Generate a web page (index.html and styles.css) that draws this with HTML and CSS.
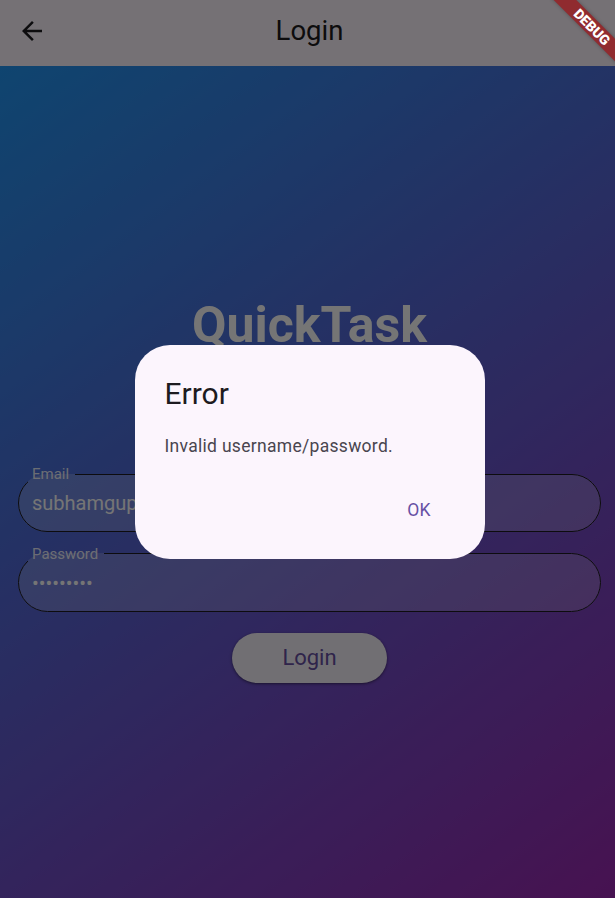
FILE: index.html
```html
<!DOCTYPE html>
<html lang="en">
<head>
<meta charset="utf-8">
<title>Login</title>
<link rel="stylesheet" href="styles.css">
</head>
<body>
<div class="screen">
  <header class="appbar">
    <button class="back" aria-label="Back">
      <svg viewBox="0 0 24 24" width="30" height="30"><path d="M20 11H7.83l5.59-5.59L12 4l-8 8 8 8 1.41-1.41L7.83 13H20v-2z"/></svg>
    </button>
    <h1 class="title">Login</h1>
    <span class="spacer"></span>
  </header>
  <main class="content">
    <div class="brand">QuickTask</div>
    <fieldset class="field">
      <legend>Email</legend>
      <div class="value">subhamgupta@gmail.com</div>
    </fieldset>
    <fieldset class="field field-second">
      <legend>Password</legend>
      <div class="value dots">•••••••••</div>
    </fieldset>
    <button class="login">Login</button>
  </main>
  <div class="barrier">
    <div class="dialog" role="alertdialog">
      <h2 class="dialog-title">Error</h2>
      <p class="dialog-body">Invalid username/password.</p>
      <div class="actions"><button class="ok">OK</button></div>
    </div>
  </div>
  <div class="banner">DEBUG</div>
</div>
</body>
</html>
```
FILE: styles.css
```css
html, body {
  margin: 0;
  padding: 0;
  overflow: hidden;
}
body {
  font-family: Roboto, "Liberation Sans", sans-serif;
}
.screen {
  position: relative;
  width: 619px;
  height: 904px;
  overflow: hidden;
}
.appbar {
  height: 66px;
  box-sizing: border-box;
  padding: 0 0 4px 17px;
  background: #fef7ff;
  display: flex;
  align-items: center;
}
.back {
  width: 30px;
  height: 30px;
  padding: 0;
  border: 0;
  background: none;
  display: flex;
}
.back svg {
  fill: #1d1b20;
}
.title {
  flex: 1;
  margin: 0;
  text-align: center;
  font-size: 27.5px;
  font-weight: 400;
  line-height: 32px;
  color: #1d1b20;
}
.spacer {
  width: 47px;
}
.content {
  height: 838px;
  box-sizing: border-box;
  padding-top: 231px;
  background: linear-gradient(143.55deg, #2196f3, #9c27b0);
  display: flex;
  flex-direction: column;
  align-items: center;
}
.brand {
  font-size: 50px;
  line-height: 56px;
  font-weight: 700;
  color: #ffffff;
  margin-bottom: 113px;
}
.field {
  align-self: stretch;
  margin: 0 18px;
  min-width: 0;
  padding: 8.7px 13px 16.8px;
  border: 1px solid #1d1b20;
  border-radius: 30px;
  background: rgba(255, 255, 255, 0.2);
}
.field legend {
  margin-left: -4px;
  padding: 0 6px 0 4px;
  font-size: 15px;
  line-height: 16px;
  color: rgba(255, 255, 255, 0.9);
}
.field-second {
  margin-top: 13.5px;
}
.value {
  font-size: 20px;
  line-height: 24px;
  color: #ffffff;
  white-space: nowrap;
  overflow: hidden;
}
.login {
  margin-top: 20.5px;
  width: 155px;
  height: 50px;
  border: 0;
  border-radius: 25px;
  background: #f7f2fa;
  color: #6750a4;
  font-family: inherit;
  font-size: 22px;
  font-weight: 400;
  box-shadow: 0 1px 2px rgba(0,0,0,0.3), 0 1px 3px 1px rgba(0,0,0,0.15);
}
.barrier {
  position: absolute;
  inset: 0;
  background: rgba(0, 0, 0, 0.54);
  display: flex;
  align-items: center;
  justify-content: center;
}
.dialog {
  width: 350px;
  box-sizing: border-box;
  padding: 29px 30px 24px;
  background: #fcf5fd;
  border-radius: 35px;
}
.dialog-title {
  margin: 0;
  font-size: 30px;
  line-height: 40px;
  font-weight: 400;
  color: #1d1b20;
}
.dialog-body {
  margin: 20.5px 0 0;
  font-size: 17.5px;
  line-height: 25px;
  letter-spacing: 0.3px;
  color: #49454f;
}
.actions {
  margin-top: 25.8px;
  padding-right: 9px;
  display: flex;
  justify-content: flex-end;
}
.ok {
  height: 50px;
  padding: 0 15px;
  border: 0;
  background: none;
  font-family: inherit;
  font-size: 17.5px;
  font-weight: 400;
  letter-spacing: 0.12px;
  line-height: 50px;
  color: #6750a4;
}
.banner {
  position: absolute;
  left: 542px;
  top: 18.5px;
  width: 100px;
  height: 16px;
  transform: rotate(45deg);
  background: #902b2f;
  color: #ffffff;
  font-size: 14px;
  font-weight: 900;
  line-height: 16px;
  text-align: center;
  box-shadow: 0 0 4px rgba(0,0,0,0.3);
}
```
